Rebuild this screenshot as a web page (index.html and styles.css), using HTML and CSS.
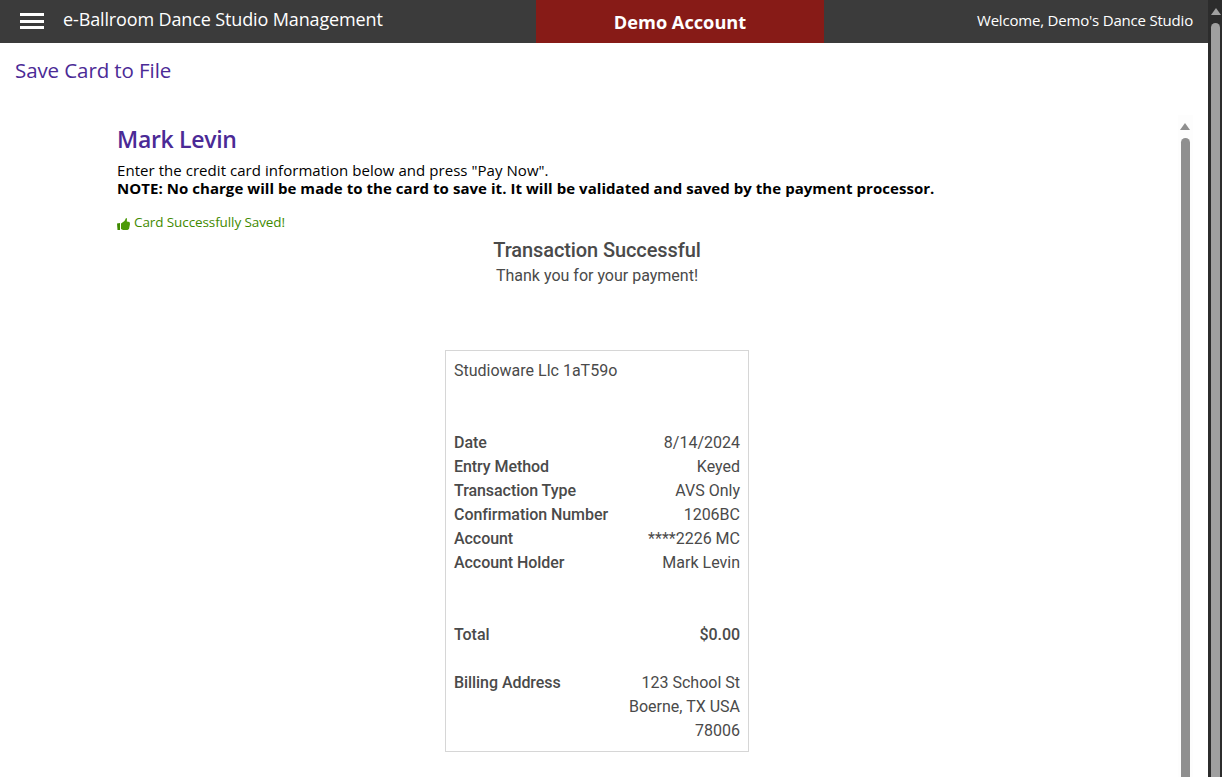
FILE: index.html
```html
<!DOCTYPE html>
<html lang="en">
<head>
    <meta charset="UTF-8">
    <title>Save Card to File</title>
    <link rel="stylesheet" href="styles.css">
</head>
<body>
<div class="page">
    <div class="main">
        <!-- top bar -->
        <div class="topbar">
            <div class="menu-icon"><span></span><span></span><span></span></div>
            <div class="app-name">e-Ballroom Dance Studio Management</div>
            <div class="demo">Demo Account</div>
            <div class="welcome">Welcome, Demo's Dance Studio</div>
        </div>
        <div class="page-title">Save Card to File</div>
        <div class="content">
            <div class="panel">
                <h2 class="name">Mark Levin</h2>
                <div class="intro">Enter the credit card information below and press "Pay Now".</div>
                <div class="note">NOTE: No charge will be made to the card to save it. It will be validated and saved by the payment processor.</div>
                <div class="saved">
                    <svg class="thumb" width="13" height="12" viewBox="0 0 13 12">
                        <path d="M0 5.5 L3 5 L3 12 L0.5 12 Z" fill="#3f8a00"/>
                        <path d="M4 5.5 L7.5 3 L9 0 L10 0.5 L9.8 3.5 L12.5 4 L13 6 L12 11 L10.5 12 L6 12 L4 11 Z" fill="#4c9a0a"/>
                    </svg>
                    Card Successfully Saved!
                </div>
                <div class="result">
                    <div class="result-title">Transaction Successful</div>
                    <div class="result-sub">Thank you for your payment!</div>
                </div>
                <div class="receipt">
                    <div class="merchant">Studioware Llc 1aT59o</div>
                    <div class="row"><span class="lbl">Date</span><span>8/14/2024</span></div>
                    <div class="row"><span class="lbl">Entry Method</span><span>Keyed</span></div>
                    <div class="row"><span class="lbl">Transaction Type</span><span>AVS Only</span></div>
                    <div class="row"><span class="lbl">Confirmation Number</span><span>1206BC</span></div>
                    <div class="row"><span class="lbl">Account</span><span>****2226 MC</span></div>
                    <div class="row"><span class="lbl">Account Holder</span><span>Mark Levin</span></div>
                    <div class="row total"><span class="lbl">Total</span><span class="lbl">$0.00</span></div>
                    <div class="row billing"><span class="lbl">Billing Address</span><span class="addr">123 School St<br>Boerne, TX USA<br>78006</span></div>
                </div>
            </div>
            <div class="inner-scroll">
                <div class="arrow"></div>
                <div class="thumb-bar"></div>
            </div>
        </div>
    </div>
    <div class="outer-scroll">
        <div class="arrow"></div>
        <div class="thumb-bar"></div>
    </div>
</div>
</body>
</html>
```

FILE: styles.css
```css
* {
    margin: 0;
    padding: 0;
    box-sizing: border-box;
}

html, body {
    height: 100%;
    overflow: hidden;
    background: #fff;
}

body {
    font-family: "Open Sans", "Noto Sans", sans-serif;
    color: #000;
}

.page {
    display: flex;
    height: 777px;
}

.main {
    flex: 1;
    min-width: 0;
    display: flex;
    flex-direction: column;
}

.topbar {
    height: 43px;
    background: #3b3b3b;
    color: #fff;
    display: flex;
    align-items: center;
    flex-shrink: 0;
}

.menu-icon {
    width: 24px;
    margin: 13px 0 0 20px;
    align-self: flex-start;
}

.menu-icon span {
    display: block;
    height: 3px;
    background: #fff;
}

.menu-icon span + span {
    margin-top: 3px;
}

.menu-icon span:nth-child(2) {
    margin-top: 4px;
}

.app-name {
    width: 473px;
    margin-left: 19px;
    padding-bottom: 6px;
    font-size: 18px;
    letter-spacing: -0.13px;
}

.demo {
    width: 288px;
    height: 43px;
    line-height: 44px;
    background: #871b17;
    text-align: center;
    font-size: 18.2px;
    font-weight: 700;
}

.welcome {
    flex: 1;
    text-align: right;
    padding-right: 15px;
    padding-bottom: 4px;
    font-size: 15px;
    letter-spacing: -0.2px;
}

.page-title {
    padding: 13px 0 0 15px;
    height: 67px;
    font-size: 20.5px;
    letter-spacing: -0.09px;
    color: #4b2a96;
    flex-shrink: 0;
}

.content {
    flex: 1;
    display: flex;
    min-height: 0;
}

.panel {
    flex: 1;
    padding-left: 117px;
    overflow: hidden;
}

.name {
    font-size: 23px;
    font-weight: 600;
    color: #4b2a96;
    line-height: 38px;
    height: 40px;
    margin-top: 10px;
    letter-spacing: -0.3px;
}

.intro, .note {
    font-size: 15px;
    line-height: 18px;
    letter-spacing: 0.05px;
}

.intro {
    margin-top: 1px;
}

.note {
    font-weight: 700;
    letter-spacing: 0.05px;
}

.saved {
    margin-top: 16px;
    font-size: 13.5px;
    line-height: 18px;
    color: #3f8a00;
    letter-spacing: -0.1px;
    display: flex;
    align-items: center;
    gap: 4px;
}

.thumb {
    margin-top: 3px;
}

.result {
    width: 960px;
    text-align: center;
    font-family: Roboto, sans-serif;
    color: #4a4a4a;
    margin-top: 7px;
}

.result-title {
    font-size: 20px;
    font-weight: 500;
    line-height: 24px;
    letter-spacing: -0.1px;
}

.result-sub {
    font-size: 16px;
    line-height: 26px;
    margin-top: 1px;
}

.receipt {
    width: 304px;
    height: 402px;
    margin: 61px 0 0 328px;
    border: 1px solid #d6d6d6;
    padding: 8px;
    font-family: Roboto, sans-serif;
    font-size: 16px;
    color: #4a4a4a;
}

.merchant {
    line-height: 24px;
    height: 72px;
}

.row {
    display: flex;
    justify-content: space-between;
    line-height: 24px;
}

.lbl {
    font-weight: 500;
    letter-spacing: -0.06px;
}

.total {
    margin-top: 48px;
}

.billing {
    margin-top: 24px;
}

.addr {
    text-align: right;
}

.inner-scroll {
    width: 15px;
    margin: 5px 15px 0 0;
    flex-shrink: 0;
    padding-top: 8px;
    display: flex;
    flex-direction: column;
    align-items: center;
    gap: 8px;
    background: #fdfdfd;
}

.inner-scroll .arrow {
    width: 0;
    height: 0;
    margin-right: 1px;
    border-left: 5px solid transparent;
    border-right: 5px solid transparent;
    border-bottom: 7px solid #8f8f8f;
}

.inner-scroll .thumb-bar {
    width: 9px;
    flex: 1;
    background: #8f8f8f;
    border-radius: 5px 5px 0 0;
}

.outer-scroll {
    width: 14px;
    flex-shrink: 0;
    background: #2c2c2c;
    padding: 8px 2px 0 3px;
    display: flex;
    flex-direction: column;
    align-items: center;
    gap: 8px;
}

.outer-scroll .arrow {
    width: 0;
    height: 0;
    border-left: 5px solid transparent;
    border-right: 5px solid transparent;
    border-bottom: 7px solid #a0a0a0;
}

.outer-scroll .thumb-bar {
    width: 9px;
    flex: 1;
    background: #a0a0a0;
    border-radius: 5px 5px 0 0;
}
```
